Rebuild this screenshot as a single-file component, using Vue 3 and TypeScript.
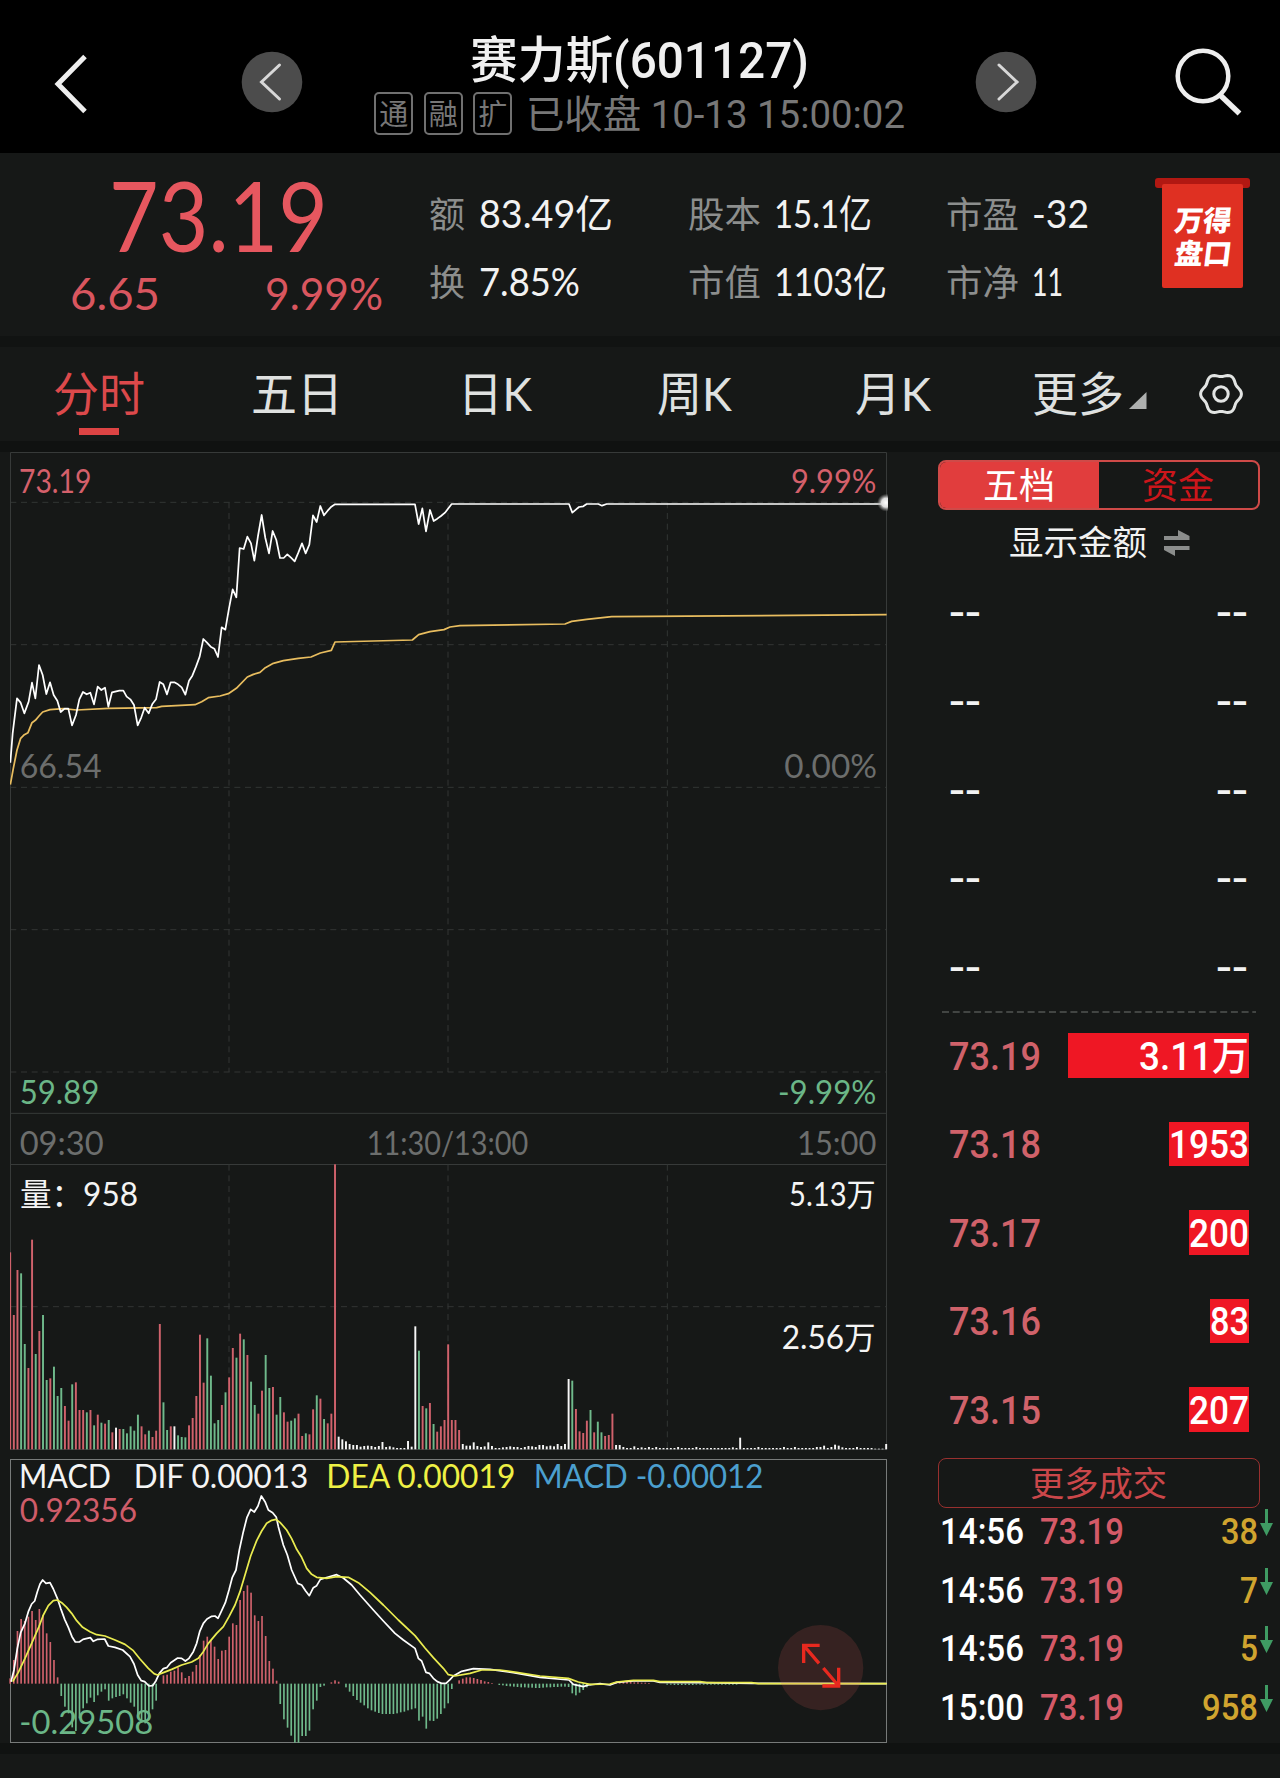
<script setup lang="ts">
import { h, type FunctionalComponent } from 'vue'

interface FitProps { t: string; w: number; s: number; h?: number }

// One line of text set to an exact width; the box runs from cap height to baseline.
const Fit: FunctionalComponent<FitProps> = (p) =>
  h('svg', { width: p.w, height: p.h ?? 28, style: 'overflow:visible;display:block;flex:none' }, [
    h('text', {
      x: 0, y: p.h ?? 28, fill: 'currentColor', 'font-size': p.s,
      textLength: p.w, lengthAdjust: 'spacingAndGlyphs', style: 'white-space:pre',
    }, p.t),
  ])
Fit.props = ['t', 'w', 's', 'h']

const tags = ['通', '融', '扩']

const stats = [
  { cls: 's1', rows: [{ k: '额', kw: 36, v: '83.49亿', vw: 134 }, { k: '换', kw: 36, v: '7.85%', vw: 101 }] },
  { cls: 's2', rows: [{ k: '股本', kw: 73, v: '15.1亿', vw: 98 }, { k: '市值', kw: 73, v: '1103亿', vw: 113 }] },
  { cls: 's3', rows: [{ k: '市盈', kw: 73, v: '-32', vw: 57 }, { k: '市净', kw: 73, v: '11', vw: 31 }] },
]

const tabs = [
  { t: '分时', w: 92, ml: 53, on: true },
  { t: '五日', w: 92, ml: 106, on: false },
  { t: '日K', w: 74, ml: 115, on: false },
  { t: '周K', w: 75, ml: 124.5, on: false },
  { t: '月K', w: 76, ml: 123, on: false },
  { t: '更多', w: 92, ml: 101, on: false },
]

const gear = (() => {
  const pts: string[] = []
  for (let a = 0; a < 360; a += 5) {
    const r = 18.9 + 1.5 * Math.cos((6 * a * Math.PI) / 180)
    pts.push(`${(22 + r * Math.cos((a * Math.PI) / 180)).toFixed(2)},${(22 + r * Math.sin((a * Math.PI) / 180)).toFixed(2)}`)
  }
  return pts.join(' ')
})()

// Chart geometry uses three units per pixel; minutes are 10.95 units apart.
const STEP = 10.95
const X0 = 30.5
const xAt = (i: number) => X0 + i * STEP

const RED = '#d0626c'
const GREEN = '#6fb98b'
const WHITE = '#f6f6f6'

const priceLine = '31,968 38,880 51,775 62,788 73,820 86,785 96,728 106,775 117,675 128,705 139,762 150,727 161,765 172,782 182,816 194,806 205,806 216,856 228,825 238,778 249,756 260,763 271,758 282,793 293,740 304,750 315,743 325,800 336,757 358,752 370,752 380,770 391,778 402,795 413,856 424,832 434,803 446,820 457,792 468,778 479,726 490,733 501,763 512,727 523,727 534,733 545,742 556,764 567,722 577,707 588,680 599,650 610,597 621,608 632,620 643,626 654,651 665,562 676,569 687,505 698,448 709,472 719,324 731,327 742,290 753,310 763,362 774,288 785,225 796,294 807,340 818,273 829,300 840,354 851,354 862,343 873,353 884,364 895,338 906,310 917,340 928,314 939,226 950,246 961,198 972,226 983,212 994,200 1005,193 1245,193 1256,252 1267,205 1278,274 1290,210 1301,243 1312,236 1323,228 1335,218 1355,192 1707,192 1717,218 1737,201 1750,199 1760,192 1795,192 1806,197 1820,192 2660,192'
const avgLine = '31,1034 40,985 51,930 62,895 73,884 84,878 96,848 106,841 117,828 128,816 150,809 190,806 230,810 325,805 470,803 485,799 585,794 605,785 625,773 660,768 685,761 709,745 742,711 760,703 780,697 796,683 820,670 850,662 895,655 933,651 961,639 994,631 1005,606 1237,600 1256,584 1290,575 1332,569 1350,561 1380,557 1695,552 1715,544 1760,538 1835,530 2660,524'

const volumeText =
  'r607 r795 r660 g670 g882 r954 r569 g912 r843 g795 g990 r985 g950 g1038 g1014 r1068 r1112 g1003 r997 r1080 r1080 g1087 r1080 g1126 r1094 g1118 r1121 g1110 r1147 w1133 ' +
  'r1137 g1137 g1150 g1129 g1142 g1094 r1129 r1153 g1142 r1161 r1142 r822 g1057 g1140 r1129 w1129 g1156 g1161 g1162 r1126 r1104 r1038 r854 r998 g865 g977 g1120 g1110 r1065 g1027 ' +
  'r982 r894 g923 r851 g868 r915 g995 g1065 r1091 r1022 g915 g1014 r1011 g1094 g1041 r1087 r1115 g1112 g1105 r1091 r1158 g1150 r1153 r1078 g1036 r1046 g1107 r1120 r1091 r343 ' +
  'w1160 w1168 w1174 w1182 w1185 w1185 w1190 w1188 w1187 w1188 w1191 w1188 w1176 w1191 w1189 w1192 w1194 w1194 w1194 w1173 w1190 w829 g902 r1068 g1075 r1059 g1122 r1145 r1129 r1110 ' +
  'r883 r1110 r1110 r1140 w1182 w1187 w1187 w1177 w1188 w1191 w1189 w1177 w1188 w1194 w1194 w1192 w1191 w1189 w1191 w1191 w1194 w1191 w1188 w1189 w1191 w1185 w1185 w1189 w1187 w1189 ' +
  'w1182 w1188 w1182 w987 g992 r1077 r1144 r1149 r1112 g1080 r1147 g1115 g1147 r1158 r1155 r1091 w1185 w1185 w1191 w1194 w1194 w1189 w1194 w1192 w1194 w1191 w1194 w1191 w1194 w1194 ' +
  'w1194 w1194 w1194 w1191 w1194 w1194 w1194 w1194 w1191 w1194 w1194 w1194 w1194 w1194 w1194 w1194 w1194 w1194 w1192 w1194 w1163 w1194 w1194 w1194 w1194 w1191 w1194 w1194 w1194 w1194 ' +
  'w1194 w1194 w1191 w1194 w1194 w1191 w1194 w1194 w1194 w1194 w1194 w1191 w1191 w1187 w1194 w1191 w1184 w1187 w1192 w1194 w1194 w1194 w1191 w1194 w1194 w1194 w1194 w1196 w1196 w1196 w1182'
const tone: Record<string, string> = { r: RED, g: GREEN, w: WHITE }
const volumes = volumeText.split(' ').map((s, i) => ({ x: xAt(i), y: Number(s.slice(1)), c: tone[s[0]] }))

const BASE = 731
const hist: number[] = [
  715, 660, 573, 537, 543, 530, 513, 540, 507, 525, 580, 606, 660, 712, 768, 800, 820, 862, 873, 835,
  805, 790, 773, 786, 766, 755, 748, 782, 775, 771, 768, 763, 775, 788, 800, 832, 843, 850, 838, 808,
  782, 731, 706, 704, 695, 692, 682, 697, 714, 708, 695, 675, 645, 602, 590, 600, 620, 657, 632, 630,
  590, 550, 555, 480, 453, 436, 458, 526, 543, 528, 588, 663, 686, 722, 792, 838, 863, 887, 908, 908,
  888, 888, 872, 808, 782, 741, 737, 731, 727, 721, 725, 731, 742, 755, 768, 780, 788, 796, 805, 811,
  815, 819, 822, 822, 822, 822, 820, 817, 815, 811, 808, 805, 842, 830, 866, 842, 843, 836, 822, 805,
  790, 747, 731, 721, 716, 712, 712, 714, 717, 720, 724, 726, 729, 731, 735, 736, 738, 739, 740, 741,
  742, 742, 743, 743, 744, 744, 743, 742, 742, 741, 741, 740, 740, 741, 760, 766, 758, 750, 742, 736,
  731, 731, 731, 731, 731, 729, 727, 726, 726, 726, 726, 727, 727, 728, 728, 729, 731, 731, 731, 731,
  734, 734, 735, 735, 735, 735, 735, 735, 734, 734, 734, 734, 734, 734, 734, 734, 734, 734, 734, 734,
]
const histBars = hist
  .map((v, i) => ({ x: xAt(i), y: Math.min(v, BASE), hgt: Math.abs(v - BASE), c: v < BASE ? RED : GREEN }))
  .filter((b) => b.hgt > 0)

const dif = '33,725 42,690 52,625 62,578 75,550 85,515 95,492 104,483 112,455 120,432 128,420 138,430 150,428 160,447 172,475 182,505 194,538 205,562 216,590 226,606 238,606 249,598 271,593 280,604 293,598 314,597 325,618 345,622 368,630 390,650 402,672 413,705 424,722 434,725 447,738 458,737 468,722 478,700 490,686 500,683 512,668 533,654 545,655 556,663 567,655 580,635 590,610 599,575 610,550 621,537 635,529 645,528 654,535 665,512 676,488 687,450 697,412 708,390 718,330 730,275 741,232 752,208 763,216 774,198 784,168 796,187 805,210 818,218 829,232 835,260 850,315 862,345 875,390 893,430 905,435 917,453 928,467 940,443 950,437 961,418 985,411 1010,404 1030,414 1055,435 1080,465 1120,510 1150,543 1185,580 1210,600 1245,625 1255,655 1265,663 1278,697 1288,700 1300,715 1312,725 1325,730 1338,730 1350,719 1360,708 1385,694 1420,686 1470,688 1540,698 1620,712 1707,720 1720,733 1750,740 1765,735 1800,731 1830,735 1850,727 1900,723 1960,723 1980,727 2100,728 2255,730 2660,731'
const dea = '38,725 55,697 75,655 95,610 117,560 130,525 145,497 160,482 172,480 185,488 200,502 215,520 230,542 248,562 270,575 290,584 315,588 345,600 375,613 400,632 420,657 445,685 462,701 472,705 490,698 515,688 545,675 575,666 595,655 610,635 625,610 650,580 670,560 687,530 705,495 720,455 735,405 752,348 770,302 785,273 800,250 815,241 828,238 840,247 860,270 875,296 890,328 905,352 920,385 935,403 950,412 980,415 1010,410 1045,412 1075,428 1110,457 1150,495 1195,540 1245,587 1275,624 1300,653 1330,685 1345,704 1365,708 1410,700 1445,690 1500,690 1550,697 1620,708 1705,715 1735,726 1770,733 1830,732 1850,726 1900,721 1960,721 1980,725 2100,725 2120,728 2255,728 2275,731 2660,731'

interface Label { t: string; x: number; w: number; y: number; c: string }
const GREY = '#6c6e6d'
const priceLabels: Label[] = [
  { t: '73.19', x: 57, w: 217, y: 158, c: '#d4606b' },
  { t: '9.99%', x: 2373, w: 256, y: 158, c: '#d4606b' },
  { t: '66.54', x: 59, w: 246, y: 1015, c: GREY },
  { t: '0.00%', x: 2353, w: 278, y: 1015, c: GREY },
  { t: '59.89', x: 59, w: 239, y: 1992, c: '#6bb687' },
  { t: '-9.99%', x: 2334, w: 295, y: 1992, c: '#6bb687' },
]
const volLabels: Label[] = [
  { t: '09:30', x: 59, w: 252, y: 315, c: GREY },
  { t: '11:30/13:00', x: 1100, w: 485, y: 315, c: GREY },
  { t: '15:00', x: 2391, w: 238, y: 315, c: GREY },
  { t: '量：958', x: 60, w: 354, y: 469, c: '#f4f4f4' },
  { t: '5.13万', x: 2367, w: 260, y: 469, c: '#f4f4f4' },
  { t: '2.56万', x: 2345, w: 282, y: 896, c: '#f4f4f4' },
]
const macdLabels: Label[] = [
  { t: 'MACD', x: 57, w: 276, y: 144, c: '#f4f4f4' },
  { t: 'DIF 0.00013', x: 401, w: 524, y: 144, c: '#f4f4f4' },
  { t: 'DEA 0.00019', x: 979, w: 567, y: 144, c: '#eef044' },
  { t: 'MACD -0.00012', x: 1601, w: 689, y: 144, c: '#4b9fce' },
  { t: '0.92356', x: 59, w: 352, y: 245, c: '#cf5c69' },
  { t: '-0.29508', x: 58, w: 402, y: 882, c: '#6bb687' },
]

const asks = [1, 2, 3, 4, 5]
const bids = [
  { p: '73.19', v: '3.11万', w: 110, bar: 181 },
  { p: '73.18', v: '1953', w: 80, bar: 80 },
  { p: '73.17', v: '200', w: 60, bar: 60 },
  { p: '73.16', v: '83', w: 39, bar: 39 },
  { p: '73.15', v: '207', w: 60, bar: 60 },
]
const trades = [
  { t: '14:56', v: '38', w: 37 },
  { t: '14:56', v: '7', w: 18 },
  { t: '14:56', v: '5', w: 18 },
  { t: '15:00', v: '958', w: 56 },
]
</script>

<template>
  <div class="app">
    <header class="top">
      <svg class="back" width="42" height="66" viewBox="0 0 42 66"><path d="M35 5.5 L8 33 L35 60.5" /></svg>
      <svg class="round prev" width="62" height="62" viewBox="0 0 62 62"><circle cx="31" cy="31" r="30.3" /><path d="M38.5 14 L20.5 31 L38.5 48" /></svg>
      <div class="heading">
        <Fit class="name" t="赛力斯(601127)" :w="339" :s="49.5" :h="36" />
        <div class="sub">
          <span v-for="t in tags" :key="t" class="tag">{{ t }}</span>
          <Fit class="clock" t="已收盘 10-13 15:00:02" :w="379" :s="39" :h="28" />
        </div>
      </div>
      <svg class="round next" width="62" height="62" viewBox="0 0 62 62"><circle cx="31" cy="31" r="30.3" /><path d="M24 14 L42 31 L24 48" /></svg>
      <svg class="search" width="72" height="72" viewBox="0 0 72 72"><circle cx="31" cy="30" r="25.3" /><path d="M47 48 L67.5 67.5" /></svg>
    </header>

    <section class="quote">
      <div class="price">
        <Fit class="last" t="73.19" :w="219" :s="97" :h="70" />
        <div class="change">
          <Fit t="6.65" :w="90" :s="45" :h="32" />
          <Fit t="9.99%" :w="118" :s="45" :h="32" />
        </div>
      </div>
      <div v-for="g in stats" :key="g.cls" class="stat" :class="g.cls">
        <div v-for="r in g.rows" :key="r.k" class="stat-row">
          <Fit class="key" :t="r.k" :w="r.kw" :s="36" />
          <Fit class="val" :t="r.v" :w="r.vw" :s="38.5" />
        </div>
      </div>
      <div class="banner">
        <div class="rod"></div>
        <div class="cloth"><span>万得</span><span>盘口</span></div>
      </div>
    </section>

    <nav class="tabs">
      <div v-for="t in tabs" :key="t.t" class="tab" :class="{ on: t.on }" :style="{ marginLeft: t.ml + 'px' }">
        <Fit :t="t.t" :w="t.w" :s="46.5" :h="35" />
        <i v-if="t.on" class="mark"></i>
      </div>
      <svg class="tri" width="18" height="18" viewBox="0 0 18 18"><path d="M17.5 0 V17 H0 Z" /></svg>
      <svg class="gear" width="44" height="44" viewBox="0 0 44 44"><polygon :points="gear" /><circle cx="22" cy="22" r="7.2" /></svg>
    </nav>

    <main class="board">
      <div class="charts">
        <svg class="chart" width="878" height="662" viewBox="30 36 2634 1986">
          <defs>
            <radialGradient id="glow"><stop offset="0" stop-color="#fff" /><stop offset=".5" stop-color="#ddd" /><stop offset="1" stop-color="#888" stop-opacity="0" /></radialGradient>
          </defs>
          <g class="grid">
            <path v-for="y in [187, 614, 1042, 1469, 1896]" :key="y" :d="`M31 ${y} H2659`" />
            <path v-for="x in [687, 1344, 2002]" :key="x" :d="`M${x} 187 V1896`" />
          </g>
          <path class="frame" d="M31.5 2022 V37.5 H2659.5 V2022 M31 2020 H2660" />
          <text v-for="l in priceLabels" :key="l.t" :x="l.x" :y="l.y" :fill="l.c" :textLength="l.w" lengthAdjust="spacingAndGlyphs">{{ l.t }}</text>
          <polyline class="line" :points="avgLine" stroke="#e8bd5f" />
          <polyline class="line" :points="priceLine" stroke="#fff" />
          <circle cx="2658" cy="188" r="27" fill="url(#glow)" />
        </svg>

        <svg class="chart" width="878" height="336" viewBox="30 192 2634 1008">
          <path class="frame" d="M31.5 192 V1199 M2659.5 192 V1199 M31 343.5 H2660 M31 1198.5 H2660" />
          <g class="grid">
            <path d="M31 770 H2659" />
            <path v-for="x in [687, 1344, 2002]" :key="x" :d="`M${x} 344 V1198`" />
          </g>
          <rect v-for="(b, i) in volumes" :key="i" :x="b.x - 2.9" :y="b.y" width="5.8" :height="1198 - b.y" :fill="b.c" />
          <text v-for="l in volLabels" :key="l.t" :x="l.x" :y="l.y" :fill="l.c" :textLength="l.w" lengthAdjust="spacingAndGlyphs">{{ l.t }}</text>
        </svg>

        <svg class="chart macd" width="878" height="285" viewBox="30 57 2634 855">
          <rect class="box" x="31.5" y="58.5" width="2628" height="849" />
          <rect v-for="(b, i) in histBars" :key="i" :x="b.x - 2.5" :y="b.y" width="5" :height="b.hgt" :fill="b.c" />
          <polyline class="line" :points="dif" stroke="#fff" />
          <polyline class="line" :points="dea" stroke="#eaec50" />
          <text v-for="l in macdLabels" :key="l.t" :x="l.x" :y="l.y" :fill="l.c" :textLength="l.w" lengthAdjust="spacingAndGlyphs">{{ l.t }}</text>
          <circle cx="2462" cy="683" r="128" fill="rgba(215,90,85,.17)" />
          <path class="expand" d="M2459 616 H2411 V669 M2411 616 L2457 670 M2470 684 L2516 738 M2516 683 V738 H2467" />
        </svg>
      </div>

      <aside class="side">
        <div class="seg">
          <div class="seg-on"><Fit t="五档" :w="72" :s="36" :h="27" /></div>
          <div class="seg-off"><Fit t="资金" :w="72" :s="36" :h="27" /></div>
        </div>
        <div class="show">
          <Fit t="显示金额" :w="138" :s="34" :h="26" />
          <svg width="26" height="26" viewBox="0 0 26 26"><path d="M0 6 H14 V0 L25.5 6 V10 H0 Z M0 16 H25.5 V20 H11 V26 L0 20 Z" /></svg>
        </div>
        <div class="asks">
          <div v-for="a in asks" :key="a" class="ask"><Fit t="--" :w="32" :s="40" /><Fit t="--" :w="32" :s="40" /></div>
        </div>
        <svg class="rule" width="314" height="2" viewBox="0 0 314 2"><path d="M0 1 H314" /></svg>
        <div class="bids">
          <div v-for="b in bids" :key="b.p" class="bid">
            <Fit class="p" :t="b.p" :w="92" :s="39.5" />
            <div class="bar" :style="{ width: b.bar + 'px' }"><Fit :t="b.v" :w="b.w" :s="39.5" /></div>
          </div>
        </div>
        <div class="more"><Fit t="更多成交" :w="137" :s="34" :h="26" /></div>
        <div class="trades">
          <div v-for="(r, i) in trades" :key="i" class="trade">
            <Fit class="time" :t="r.t" :w="84" :s="37" :h="26" />
            <Fit class="p" t="73.19" :w="84" :s="37" :h="26" />
            <Fit class="v" :t="r.v" :w="r.w" :s="37" :h="26" />
            <svg class="down" width="13" height="27" viewBox="0 0 13 27"><path d="M5 0 H8 V14 H13 L6.5 27 L0 14 H5 Z" /></svg>
          </div>
        </div>
      </aside>
    </main>
    <footer class="foot"></footer>
  </div>
</template>

<style>
body { background: #161817; }
</style>

<style scoped>
.app {
  width: 1280px;
  height: 1778px;
  overflow: hidden;
  box-sizing: border-box;
  display: flex;
  flex-direction: column;
  background: #161817;
  color: #f2f2f2;
  font-family: Lato, "Noto Sans CJK SC", sans-serif;
}
.top {
  height: 153px;
  flex: none;
  display: flex;
  align-items: flex-start;
  background: #000;
}
.top .back, .top .round, .top .search { fill: none; stroke: #eee; }
.back { margin: 51px 0 0 50px; flex: none; }
.back path { stroke-width: 5; }
.round { margin-top: 50.5px; flex: none; }
.round circle { fill: #4c4c4c; stroke: none; }
.round path { stroke: #d8d8d8; stroke-width: 3; stroke-linecap: round; }
.prev { margin-left: 149px; }
.heading {
  width: 534px;
  flex: none;
  margin: 41.5px 0 0 69.5px;
  display: flex;
  flex-direction: column;
  align-items: center;
  font-family: Roboto, "Noto Sans CJK SC", sans-serif;
}
.name { font-weight: 500; color: #f0f0f0; }
.sub { margin-top: 14.5px; display: flex; color: #777; }
.tag {
  width: 39px;
  height: 43px;
  box-sizing: border-box;
  margin-right: 10.5px;
  border: 2px solid #707070;
  border-radius: 5px;
  font: 29px/37px "Noto Sans CJK SC", sans-serif;
  display: flex;
  justify-content: center;
}
.clock { margin: 8px 0 0 3px; }
.next { margin-left: 68.5px; }
.search { margin: 46px 0 0 135px; }
.search circle { stroke-width: 4.5; }
.search path { stroke-width: 5.5; }

.quote {
  height: 183px;
  flex: none;
  display: flex;
  align-items: flex-start;
}
.price { width: 429px; flex: none; padding-top: 29px; color: #d9565f; }
.last { margin-left: 109px; color: #e6575f; }
.change { display: flex; margin: 26px 0 0 70px; gap: 105px; }
.stat { padding-top: 47px; flex: none; display: flex; flex-direction: column; gap: 40px; }
.stat-row { display: flex; gap: 13px; }
.key { color: #8c8e8d; }
.s1 { width: 258.5px; }
.s1 .stat-row { gap: 14px; }
.s2 { width: 258.5px; }
.s3 { width: 209px; }
.banner { margin-top: 25px; width: 95px; display: flex; flex-direction: column; align-items: center; }
.rod { width: 95px; height: 10px; border-radius: 3px; background: #b11812; }
.cloth {
  width: 81px;
  height: 104px;
  margin-top: -4px;
  box-sizing: border-box;
  padding: 17.5px 0 0 2px;
  border-radius: 2px;
  background: #df3022;
  display: flex;
  flex-direction: column;
  align-items: center;
  color: #fff;
  font: 900 28.5px/33px "Noto Sans CJK SC", sans-serif;
}
.cloth span { transform: skewX(-7deg); }

.tabs {
  height: 94px;
  flex: none;
  border-top: 11px solid #111312;
  border-bottom: 11px solid #101211;
  display: flex;
  align-items: flex-start;
}
.tab {
  padding-top: 28.5px;
  color: #dfe1e0;
  flex: none;
  display: flex;
  flex-direction: column;
  align-items: center;
}
.tab.on { color: #dc494b; }
.mark { width: 40px; height: 7px; margin-top: 17.5px; background: #dd4444; }
.tri { margin: 45px 0 0 5px; fill: #aeb0af; flex: none; }
.gear { margin: 24.5px 0 0 52px; flex: none; fill: none; stroke: #e2e4e3; stroke-width: 3; }

.board { height: 1291px; flex: none; display: flex; }
.charts { width: 878px; margin-left: 10px; flex: none; display: flex; flex-direction: column; }
.chart { display: block; flex: none; font-size: 96px; }
.macd { margin-top: 9px; overflow: visible; }
.grid path { fill: none; stroke: #323534; stroke-width: 3; stroke-dasharray: 18 14; }
.frame { fill: none; stroke: #373a39; stroke-width: 3; }
.box { fill: none; stroke: #777a79; stroke-width: 3; }
.line { fill: none; stroke-width: 5.2; stroke-linejoin: round; }
.expand { fill: none; stroke: #e8291f; stroke-width: 10; }

.side {
  width: 342px;
  margin-left: 49.5px;
  display: flex;
  flex-direction: column;
  font-family: Roboto, "Noto Sans CJK SC", sans-serif;
  font-weight: 500;
}
.seg, .show, .more { font-weight: 400; }
.seg {
  width: 322px;
  height: 50px;
  margin-top: 8px;
  flex: none;
  box-sizing: border-box;
  border: 2px solid #cf4a48;
  border-radius: 8px;
  overflow: hidden;
  display: flex;
}
.seg > div { flex: 1; display: flex; align-items: center; justify-content: center; }
.seg-on { background: #e13d3d; color: #fff; }
.seg-off { color: #cc161b; }
.show { margin: 19px 0 0 71px; display: flex; gap: 17px; }
.show svg:last-child { fill: #8b8d8c; margin-top: 1px; }
.asks { margin: 43px 0 0 11.5px; width: 299px; display: flex; flex-direction: column; gap: 60.8px; }
.ask { display: flex; justify-content: space-between; }
.rule { margin: 29px 0 0 4px; flex: none; }
.rule path { stroke: #6f7271; stroke-width: 1.2; stroke-dasharray: 7 3.7; }
.bids { margin: 20px 0 0 11.5px; width: 300px; display: flex; flex-direction: column; gap: 43.7px; }
.bid { height: 44.8px; display: flex; justify-content: space-between; align-items: center; }
.bid .p { color: #d0626a; }
.bar { height: 44.8px; background: #ef1724; color: #fff; display: flex; align-items: center; justify-content: flex-end; }
.more {
  width: 322px;
  height: 50px;
  flex: none;
  box-sizing: border-box;
  margin-top: 26px;
  border: 1.5px solid #98302f;
  border-radius: 8px;
  display: flex;
  align-items: center;
  justify-content: center;
  color: #cb474a;
}
.trades { display: flex; flex-direction: column; gap: 23.7px; }
.trade { height: 35px; display: flex; }
.trade > svg { margin-top: 10px; }
.trade .time { margin-left: 2px; color: #fff; }
.trade .p { margin-left: 16px; color: #d45a68; }
.trade .v { margin-left: auto; color: #d0a42f; }
.trade .down { margin: 1px 7px 0 2px; fill: #3f9b63; flex: none; }

.foot { height: 35px; flex: none; box-sizing: border-box; border-top: 11px solid #101211; }
</style>
